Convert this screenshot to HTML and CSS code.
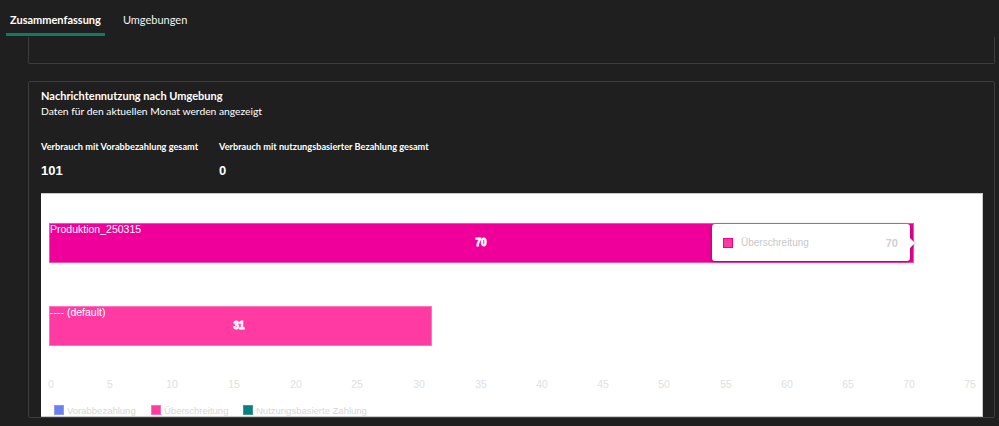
FILE: index.html
```html
<!DOCTYPE html>
<html>
<head>
    <meta charset="UTF-8">
    <meta name="viewport" content="width=device-width, initial-scale=1.0">
    <title>Nachrichtennutzung</title>
    <link rel="stylesheet" href="styles.css">
</head>

<body>
<nav class="tabs">
    <a class="tab tab--active">Zusammenfassung</a>
    <a class="tab">Umgebungen</a>
</nav>

<div class="content">
    <div class="card card--top"></div>

    <div class="card">
        <h2 class="card__title">Nachrichtennutzung nach Umgebung</h2>
        <p class="card__sub">Daten für den aktuellen Monat werden angezeigt</p>

        <div class="stats">
            <div class="stat">
                <div class="stat__label">Verbrauch mit Vorabbezahlung gesamt</div>
                <div class="stat__value">101</div>
            </div>
            <div class="stat">
                <div class="stat__label">Verbrauch mit nutzungsbasierter Bezahlung gesamt</div>
                <div class="stat__value">0</div>
            </div>
        </div>

        <div class="chart">
            <svg class="chart__svg" width="942" height="223" viewBox="0 0 942 223">
                <!-- bars -->
                <rect class="bar bar--dark" x="8.5" y="29.5" width="864" height="39"/>
                <text class="bar__name" x="9" y="39">Produktion_250315</text>
                <text class="bar__value" x="440" y="52">70</text>

                <rect class="bar bar--light" x="8.5" y="112.5" width="382" height="39"/>
                <text class="bar__name" x="9" y="122">---- (default)</text>
                <text class="bar__value" x="198" y="135">31</text>

                <!-- x axis -->
                <g class="axis">
                    <text x="10" y="194">0</text>
                    <text x="69" y="194">5</text>
                    <text x="131" y="194">10</text>
                    <text x="193" y="194">15</text>
                    <text x="255" y="194">20</text>
                    <text x="316" y="194">25</text>
                    <text x="378" y="194">30</text>
                    <text x="440" y="194">35</text>
                    <text x="501" y="194">40</text>
                    <text x="562" y="194">45</text>
                    <text x="623" y="194">50</text>
                    <text x="685" y="194">55</text>
                    <text x="746" y="194">60</text>
                    <text x="807" y="194">65</text>
                    <text x="868" y="194">70</text>
                    <text x="929" y="194">75</text>
                </g>

                <!-- legend -->
                <g class="legend">
                    <rect class="legend__box" x="13.5" y="211.5" width="9" height="9" fill="#6b80f0" stroke="#8a9af4"/>
                    <text x="26" y="220">Vorabbezahlung</text>
                    <rect class="legend__box" x="110.5" y="211.5" width="9" height="9" fill="#ff3ba0" stroke="#ff6cba"/>
                    <text x="123" y="220">Überschreitung</text>
                    <rect class="legend__box" x="202.5" y="211.5" width="9" height="9" fill="#0b7f7f" stroke="#3a9a9a"/>
                    <text x="215" y="220">Nutzungsbasierte Zahlung</text>
                </g>
            </svg>

            <div class="tooltip">
                <span class="tooltip__box"></span>
                <span class="tooltip__name">Überschreitung</span>
                <span class="tooltip__value">70</span>
            </div>
        </div>
    </div>
</div>
</body>
</html>
```

FILE: styles.css
```css
* {
    padding: 0;
    margin: 0;
    box-sizing: border-box;
}

html {
    height: 100%;
}

body {
    height: 100%;
    font-family: Lato, "Noto Sans", sans-serif;
    background-color: #1f1f1f;
    color: #fff;
    overflow: hidden;
}

.tabs {
    display: flex;
    gap: 14px;
    padding: 0 0 0 6px;
    height: 37px;
}

.tab {
    display: flex;
    align-items: center;
    height: 36px;
    padding: 5px 4px 0;
    font-size: 11px;
    color: #f2f2f2;
    border-bottom: 3px solid transparent;
}

.tab--active {
    font-weight: 700;
    color: #fff;
    border-bottom-color: #0f7b5f;
}

.content {
    padding: 0 4px 0 28px;
}

.card {
    border: 1px solid #3c3c3c;
    border-radius: 2px;
    padding: 6px 11px 0 12px;
    margin-bottom: 17px;
}

.card--top {
    height: 27px;
    border-top: none;
    border-radius: 0 0 2px 2px;
}

.card__title {
    font-size: 11px;
    font-weight: 700;
    line-height: 16px;
}

.card__sub {
    font-size: 10.3px;
    line-height: 14px;
}

.stats {
    display: flex;
    margin-top: 22px;
}

.stat {
    width: 178px;
}

.stat:last-child {
    width: auto;
}

.stat__label {
    font-size: 9.2px;
    font-weight: 700;
    line-height: 14px;
}

.stat__value {
    font-family: "Liberation Sans", Arial, sans-serif;
    font-size: 13px;
    font-weight: 700;
    line-height: 16px;
    margin-top: 9px;
}

.chart {
    position: relative;
    margin-top: 14px;
    height: 224px;
    background: #fff;
    border: 1px solid #c9c9c9;
    border-left: none;
}

.chart__svg {
    display: block;
    font-family: "Liberation Sans", Arial, sans-serif;
}

.bar--dark {
    fill: #f0009b;
    stroke: #f74fb6;
}

.bar--light {
    fill: #ff3ba3;
    stroke: #ff74bd;
}

.bar__name {
    font-size: 10.5px;
    fill: #fff;
}

.bar__value {
    font-size: 10px;
    font-weight: 700;
    fill: #fff;
    stroke: #fff;
    stroke-width: 0.8px;
    text-anchor: middle;
}

.axis text {
    font-size: 10.5px;
    fill: #e0e0e0;
    text-anchor: middle;
}

.legend text {
    font-size: 9.5px;
    fill: #d6d6d6;
}

.tooltip {
    position: absolute;
    left: 671px;
    top: 30px;
    width: 198px;
    height: 37px;
    display: flex;
    align-items: center;
    padding: 0 12px 0 11px;
    background: #fff;
    border-radius: 3px;
    box-shadow: 0 1px 4px rgba(0, 0, 0, 0.35);
    font-family: "Liberation Sans", Arial, sans-serif;
}

.tooltip::after {
    content: '';
    position: absolute;
    right: -5px;
    top: 14px;
    border-left: 5px solid #fff;
    border-top: 5px solid transparent;
    border-bottom: 5px solid transparent;
    filter: drop-shadow(1px 0 1px rgba(0, 0, 0, 0.25));
}

.tooltip__box {
    width: 10px;
    height: 10px;
    background: #ff3ba0;
    border: 1px solid #f0008f;
}

.tooltip__name {
    flex: 1;
    margin-left: 8px;
    font-size: 10px;
    color: #c8c8c8;
}

.tooltip__value {
    font-size: 11px;
    font-weight: 700;
    color: #cfcfcf;
}
```
